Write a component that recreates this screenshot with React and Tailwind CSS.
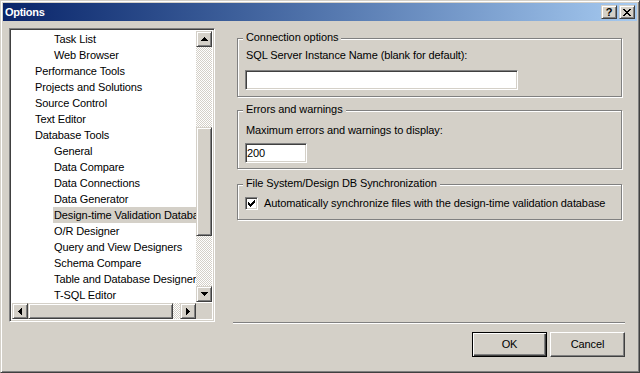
import React from "react";

const raised =
  "border border-t-[#d4d0c8] border-l-[#d4d0c8] border-r-[#404040] border-b-[#404040] shadow-[inset_1px_1px_0_#ffffff,inset_-1px_-1px_0_#808080] bg-[#d4d0c8]";
const sunken =
  "border border-t-[#808080] border-l-[#808080] border-r-white border-b-white shadow-[inset_1px_1px_0_#404040,inset_-1px_-1px_0_#d4d0c8]";
const track = "[background-image:repeating-conic-gradient(#d4d0c8_0_25%,#ffffff_0_50%)] [background-size:2px_2px]";

function Arrow({ dir }) {
  const rects =
    dir === "up"
      ? [[3, 0, 1, 1], [2, 1, 3, 1], [1, 2, 5, 1], [0, 3, 7, 1]]
      : dir === "down"
      ? [[0, 0, 7, 1], [1, 1, 5, 1], [2, 2, 3, 1], [3, 3, 1, 1]]
      : dir === "left"
      ? [[3, 0, 1, 7], [2, 1, 1, 5], [1, 2, 1, 3], [0, 3, 1, 1]]
      : [[0, 0, 1, 7], [1, 1, 1, 5], [2, 2, 1, 3], [3, 3, 1, 1]];
  const vert = dir === "up" || dir === "down";
  return (
    <svg width={vert ? 7 : 4} height={vert ? 4 : 7} shapeRendering="crispEdges">
      {rects.map((r, i) => (
        <rect key={i} x={r[0]} y={r[1]} width={r[2]} height={r[3]} fill="#000" />
      ))}
    </svg>
  );
}

function SBtn({ dir }) {
  return (
    <div className={`w-[16px] h-[16px] shrink-0 flex items-center justify-center ${raised}`}>
      <Arrow dir={dir} />
    </div>
  );
}

const items = [
  [2, "Task List"],
  [2, "Web Browser"],
  [1, "Performance Tools"],
  [1, "Projects and Solutions"],
  [1, "Source Control"],
  [1, "Text Editor"],
  [1, "Database Tools"],
  [2, "General"],
  [2, "Data Compare"],
  [2, "Data Connections"],
  [2, "Data Generator"],
  [2, "Design-time Validation Database", true],
  [2, "O/R Designer"],
  [2, "Query and View Designers"],
  [2, "Schema Compare"],
  [2, "Table and Database Designers"],
  [2, "T-SQL Editor"],
];

function GroupBox({ title, className, children }) {
  return (
    <div
      className={`relative ml-[4px] w-[385px] border border-[#808080] shadow-[inset_1px_1px_0_#ffffff,1px_1px_0_#ffffff] ${className}`}
    >
      <span className="absolute left-[5px] top-[-8px] px-[3px] bg-[#d4d0c8] leading-[13px] whitespace-nowrap">
        {title}
      </span>
      {children}
    </div>
  );
}

export default function App() {
  return (
    <div className="w-[640px] h-[373px] bg-[#d4d0c8] overflow-hidden font-['Liberation_Sans',Arial,sans-serif] text-[11px] tracking-[-0.1px] text-black">
      <div className="w-full h-full border border-t-[#d4d0c8] border-l-[#d4d0c8] border-r-[#404040] border-b-[#404040] shadow-[inset_1px_1px_0_#ffffff,inset_-1px_-1px_0_#808080] p-[2px] flex flex-col">
        {/* Title bar */}
        <div className="h-[18px] shrink-0 flex items-center justify-between bg-linear-to-r from-[#0a246a] to-[#a6caf0] pl-[2px] pr-[2px]">
          <span className="text-white font-bold tracking-[-0.3px] leading-[18px]">Options</span>
          <div className="flex gap-[2px]">
            <div className={`w-[16px] h-[14px] flex items-center justify-center ${raised}`}>
              <span className="font-bold text-[11px] leading-[11px] tracking-normal">?</span>
            </div>
            <div className={`w-[16px] h-[14px] flex items-center justify-center ${raised}`}>
              <svg width="8" height="7" shapeRendering="crispEdges">
                <path d="M0 0h2v1h-2zM6 0h2v1h-2zM1 1h2v1h-2zM5 1h2v1h-2zM2 2h4v1h-4zM3 3h2v1h-2zM2 4h4v1h-4zM1 5h2v1h-2zM5 5h2v1h-2zM0 6h2v1h-2zM6 6h2v1h-2z" fill="#000" />
              </svg>
            </div>
          </div>
        </div>

        {/* Body */}
        <div className="flex-1 flex pl-[6px] pt-[7px] gap-[18px]">
          {/* Tree list */}
          <div className={`w-[206px] h-[294px] shrink-0 bg-white flex flex-col p-px ${sunken}`}>
            <div className="flex-1 flex min-h-0 p-px">
              <div className="flex-1 overflow-hidden whitespace-nowrap">
                {items.map(([lvl, text, sel], i) => (
                  <div
                    key={i}
                    className={`h-[16px] leading-[16px] flex ${lvl === 1 ? "pl-[22px]" : "pl-[41px]"}`}
                  >
                    <span className={`px-[1px] ${sel ? "flex-1 bg-[#d4d0c8]" : ""}`}>{text}</span>
                  </div>
                ))}
              </div>
              <div className="w-[16px] flex flex-col">
                <SBtn dir="up" />
                <div className={`flex-1 flex flex-col ${track}`}>
                  <div className="h-[80px]" />
                  <div className={`h-[109px] ${raised}`} />
                </div>
                <SBtn dir="down" />
              </div>
            </div>
            <div className="h-[16px] flex px-px mb-px">
              <SBtn dir="left" />
              <div className={`flex-1 flex ${track}`}>
                <div className={`w-[145px] ${raised}`} />
              </div>
              <SBtn dir="right" />
              <div className="w-[16px] bg-[#d4d0c8]" />
            </div>
          </div>

          {/* Right column */}
          <div className="w-[392px] h-[329px] flex flex-col">
            <GroupBox title="Connection options" className="mt-[10px] h-[59px] px-[7px] pt-[10px]">
              <div className="leading-[13px] pl-px">SQL Server Instance Name (blank for default):</div>
              <div className={`mt-[8px] w-[273px] h-[20px] bg-white ${sunken}`} />
            </GroupBox>

            <GroupBox title="Errors and warnings" className="mt-[13px] h-[59px] px-[7px] pt-[13px]">
              <div className="leading-[13px] pl-px">Maximum errors and warnings to display:</div>
              <div className={`mt-[6px] w-[62px] h-[20px] bg-white flex items-center pl-px ${sunken}`}>
                <span className="leading-[13px]">200</span>
              </div>
            </GroupBox>

            <GroupBox title="File System/Design DB Synchronization" className="mt-[15px] h-[36px] px-[7px] pt-[12px]">
              <div className="flex items-center h-[13px]">
                <div className={`w-[13px] h-[13px] bg-white flex items-center justify-center ${sunken}`}>
                  <svg width="7" height="7" shapeRendering="crispEdges">
                    <path d="M6 0h1v3h-1zM5 1h1v3h-1zM4 2h1v3h-1zM3 3h1v3h-1zM2 4h1v3h-1zM1 3h1v3h-1zM0 2h1v3h-1z" fill="#000" />
                  </svg>
                </div>
                <span className="ml-[6px] leading-[13px]">
                  Automatically synchronize files with the design-time validation database
                </span>
              </div>
            </GroupBox>

            <div className="mt-auto h-[2px] border-t border-t-[#808080] border-b border-b-white" />

            <div className="mt-[8px] flex justify-end gap-[3px]">
              <div className="w-[75px] h-[25px] border border-black shadow-[inset_1px_1px_0_#ffffff,inset_-1px_-1px_0_#404040,inset_-2px_-2px_0_#808080] flex items-center justify-center">
                OK
              </div>
              <div className="w-[75px] h-[25px] border border-t-white border-l-white border-r-[#404040] border-b-[#404040] shadow-[inset_-1px_-1px_0_#808080] flex items-center justify-center">
                Cancel
              </div>
            </div>
          </div>
        </div>
      </div>
    </div>
  );
}
